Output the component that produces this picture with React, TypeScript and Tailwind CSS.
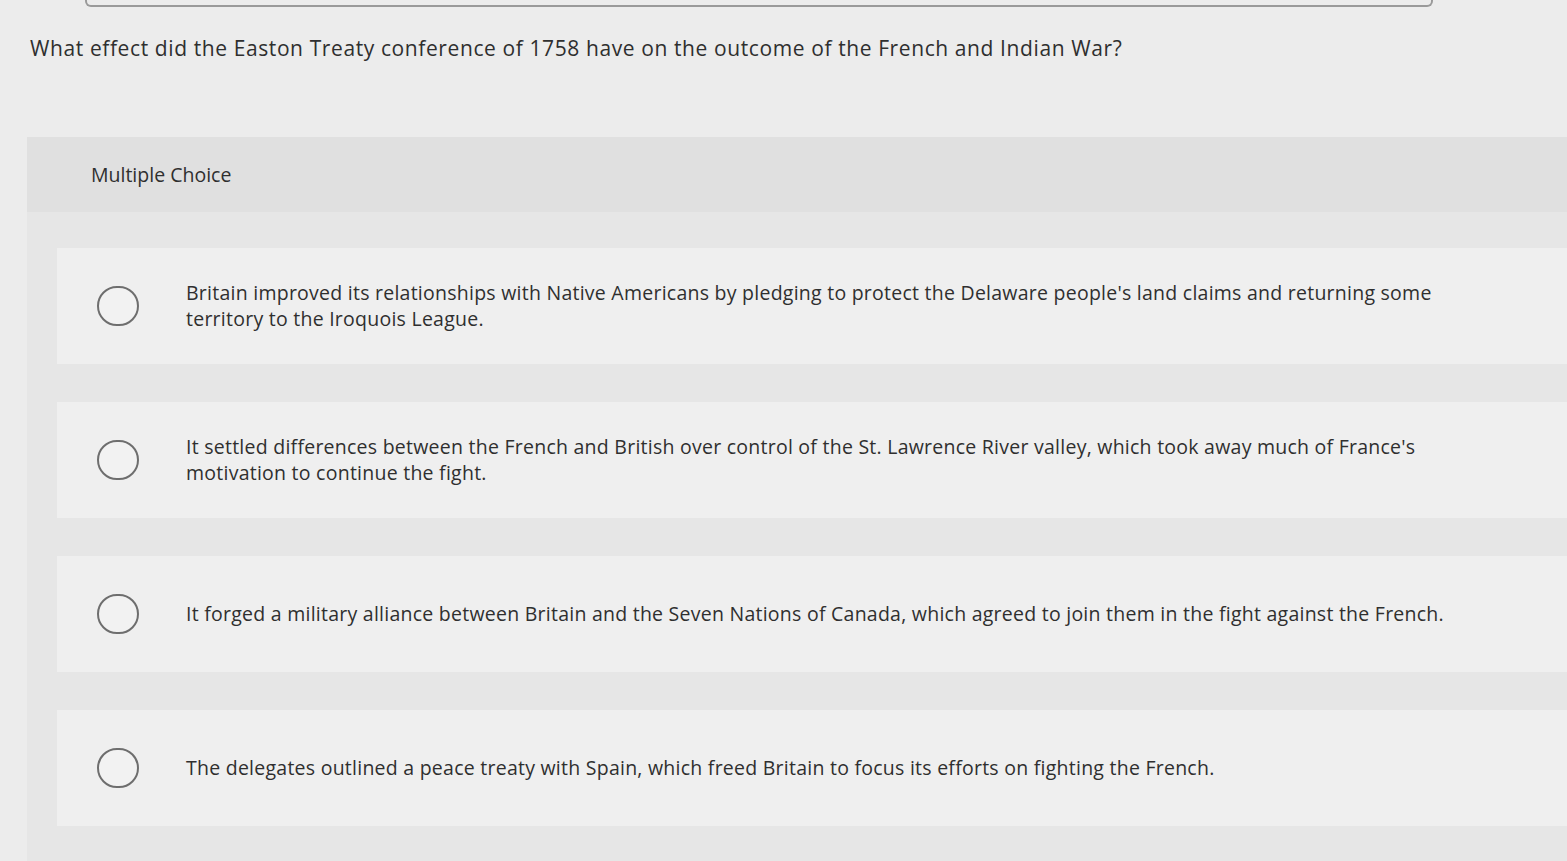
import React from "react";

const options = [
  "Britain improved its relationships with Native Americans by pledging to protect the Delaware people's land claims and returning some territory to the Iroquois League.",
  "It settled differences between the French and British over control of the St. Lawrence River valley, which took away much of France's motivation to continue the fight.",
  "It forged a military alliance between Britain and the Seven Nations of Canada, which agreed to join them in the fight against the French.",
  "The delegates outlined a peace treaty with Spain, which freed Britain to focus its efforts on fighting the French.",
];

export default function App() {
  return (
    <main
      className="flex h-[861px] w-[1567px] flex-col overflow-hidden bg-[#ececec] text-[#2f2f2f]"
      style={{ fontFamily: "'Open Sans', Lato, sans-serif" }}
    >
      <div className="ml-[85px] mr-[134px] h-[7px] shrink-0 rounded-b-md border-x-2 border-b-2 border-[#9a9a9a]" />
      <h1 className="ml-[30px] mt-[28px] text-[21px] leading-[26px] tracking-[0.6px]">
        What effect did the Easton Treaty conference of 1758 have on the outcome of the French and Indian War?
      </h1>

      <section className="ml-[27px] mt-[76px] flex-1 bg-[#e6e6e6]">
        <div className="flex h-[75px] items-center bg-[#e0e0e0] pl-[64px] text-[19.5px]">
          Multiple Choice
        </div>
        <div className="flex flex-col gap-[38px] pl-[30px] pt-[36px]">
          {options.map((text, i) => (
            <div
              key={i}
              className="flex min-h-[116px] items-center bg-[#efefef] py-[22px] pl-[40px]"
            >
              <span className="h-[40px] w-[42px] shrink-0 rounded-full border-2 border-[#6e6e6e] bg-[#f2f2f2]" />
              <p className="ml-[47px] max-w-[1262px] text-[19.5px] leading-[26px] tracking-[0.25px]">{text}</p>
            </div>
          ))}
        </div>
      </section>
    </main>
  );
}
